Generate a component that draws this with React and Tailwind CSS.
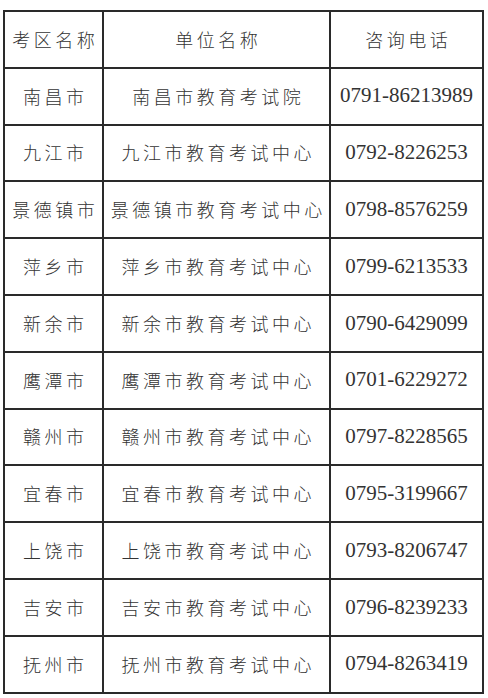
const rows = [
  ['南昌市', '南昌市教育考试院', '0791-86213989'],
  ['九江市', '九江市教育考试中心', '0792-8226253'],
  ['景德镇市', '景德镇市教育考试中心', '0798-8576259'],
  ['萍乡市', '萍乡市教育考试中心', '0799-6213533'],
  ['新余市', '新余市教育考试中心', '0790-6429099'],
  ['鹰潭市', '鹰潭市教育考试中心', '0701-6229272'],
  ['赣州市', '赣州市教育考试中心', '0797-8228565'],
  ['宜春市', '宜春市教育考试中心', '0795-3199667'],
  ['上饶市', '上饶市教育考试中心', '0793-8206747'],
  ['吉安市', '吉安市教育考试中心', '0796-8239233'],
  ['抚州市', '抚州市教育考试中心', '0794-8263419'],
]

const cjk = "font-['Noto_Sans_CJK_SC',sans-serif] font-light text-[18px] tracking-[3.5px] pl-[3.5px]"
const num = "font-['Liberation_Serif','Noto_Sans_CJK_SC',serif] text-[21px]"
const cell = 'h-[56.8px] border-r-2 border-b-2 border-[#2a2a2a] flex items-center justify-center text-[#333] whitespace-nowrap'

export default function App() {
  return (
    <div className="min-h-[698px] w-[488px] bg-white pt-[10px] pl-[3px]">
      <div className="grid w-[481px] grid-cols-[99px_227px_153px] border-l-2 border-t-2 border-[#2a2a2a]">
        <div className={`${cell} ${cjk}`}>考区名称</div>
        <div className={`${cell} ${cjk}`}>单位名称</div>
        <div className={`${cell} ${cjk}`}>咨询电话</div>
        {rows.map(([city, unit, tel]) => (
          <div key={city} className="contents">
            <div className={`${cell} ${cjk}`}>{city}</div>
            <div className={`${cell} ${cjk}`}>{unit}</div>
            <div className={`${cell} ${num}`}>{tel}</div>
          </div>
        ))}
      </div>
    </div>
  )
}
